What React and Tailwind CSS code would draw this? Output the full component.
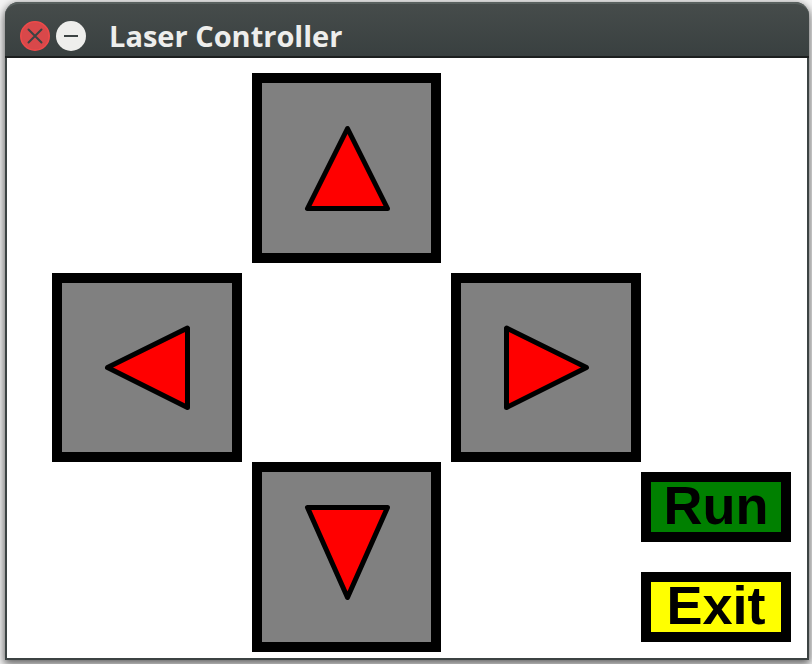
import React from "react";

function ArrowButton({ label, points, className }) {
  return (
    <button
      type="button"
      aria-label={label}
      className={`flex items-start border-[10px] border-black bg-[#808080] ${className}`}
    >
      <svg width="169" height="169" viewBox="0 0 169 169" className="block" aria-hidden="true">
        <polygon
          points={points}
          fill="#ff0000"
          stroke="#000000"
          strokeWidth="5"
          strokeLinejoin="round"
        />
      </svg>
    </button>
  );
}

function ActionButton({ children, className }) {
  return (
    <button
      type="button"
      className={`flex h-[70px] w-[150px] items-center justify-center border-[10px] border-black pb-1 font-['Liberation_Sans',Arial,sans-serif] text-[54px] leading-[48px] font-bold text-black ${className}`}
    >
      {children}
    </button>
  );
}

function TitleBar() {
  return (
    <header className="flex h-14 items-center gap-[6px] rounded-t-[14px] border-t-2 border-b-2 border-t-[#59615f] border-b-[#1c1f1f] bg-linear-to-b from-[#464c4b] to-[#394040] pt-3 pl-[15px]">
      <button type="button" aria-label="Close" className="size-[30px]">
        <svg width="30" height="30" viewBox="0 0 30 30" aria-hidden="true">
          <circle cx="15" cy="15" r="14.2" fill="#d9484a" stroke="#ee4a4a" strokeWidth="1.6" />
          <path d="M8.5 8.5 21.5 21.5M21.5 8.5 8.5 21.5" stroke="#3c4343" strokeWidth="2" strokeLinecap="round" />
        </svg>
      </button>
      <button type="button" aria-label="Minimize" className="size-[30px]">
        <svg width="30" height="30" viewBox="0 0 30 30" aria-hidden="true">
          <circle cx="15" cy="15" r="15" fill="#eeeeec" />
          <path d="M8 15H22" stroke="#3c4343" strokeWidth="2" />
        </svg>
      </button>
      <h1 className="pl-[17px] font-['Open_Sans',sans-serif] text-[29px] leading-8 font-bold text-[#eeeeec]">
        Laser Controller
      </h1>
    </header>
  );
}

export default function App() {
  return (
    <div className="flex min-h-screen overflow-hidden bg-[#f4f4f4] pt-[2px] pr-[3px] pb-1 pl-[5px]">
      <div className="flex flex-1 flex-col rounded-t-[14px] bg-[#3c4343] shadow-[0_3px_8px_1px_rgba(0,0,0,0.6)]">
        <TitleBar />
        <main className="mx-[2px] mb-[2px] flex flex-1 items-start justify-between bg-white pt-[15px] pr-4 pb-[6px] pl-[45px]">
          <div className="grid grid-cols-[190px_189px_190px] grid-rows-[190px_199px_190px] gap-x-[10px]">
            <ArrowButton label="Up" points="85.5,45.5 45.5,125.5 125.5,125.5" className="col-start-2" />
            <ArrowButton
              label="Left"
              points="45.5,84.5 125.5,45 125.5,124.5"
              className="col-start-1 row-start-2 mt-[10px]"
            />
            <ArrowButton
              label="Right"
              points="45.5,45 45.5,124.5 125.5,84.5"
              className="col-start-3 row-start-2 mt-[10px]"
            />
            <ArrowButton
              label="Down"
              points="45.5,35.5 125.5,35.5 85.5,125.5"
              className="col-start-2 row-start-3"
            />
          </div>
          <div className="flex flex-col gap-[30px] self-end pb-[10px]">
            <ActionButton className="bg-[#008000]">Run</ActionButton>
            <ActionButton className="bg-[#ffff00]">Exit</ActionButton>
          </div>
        </main>
      </div>
    </div>
  );
}
